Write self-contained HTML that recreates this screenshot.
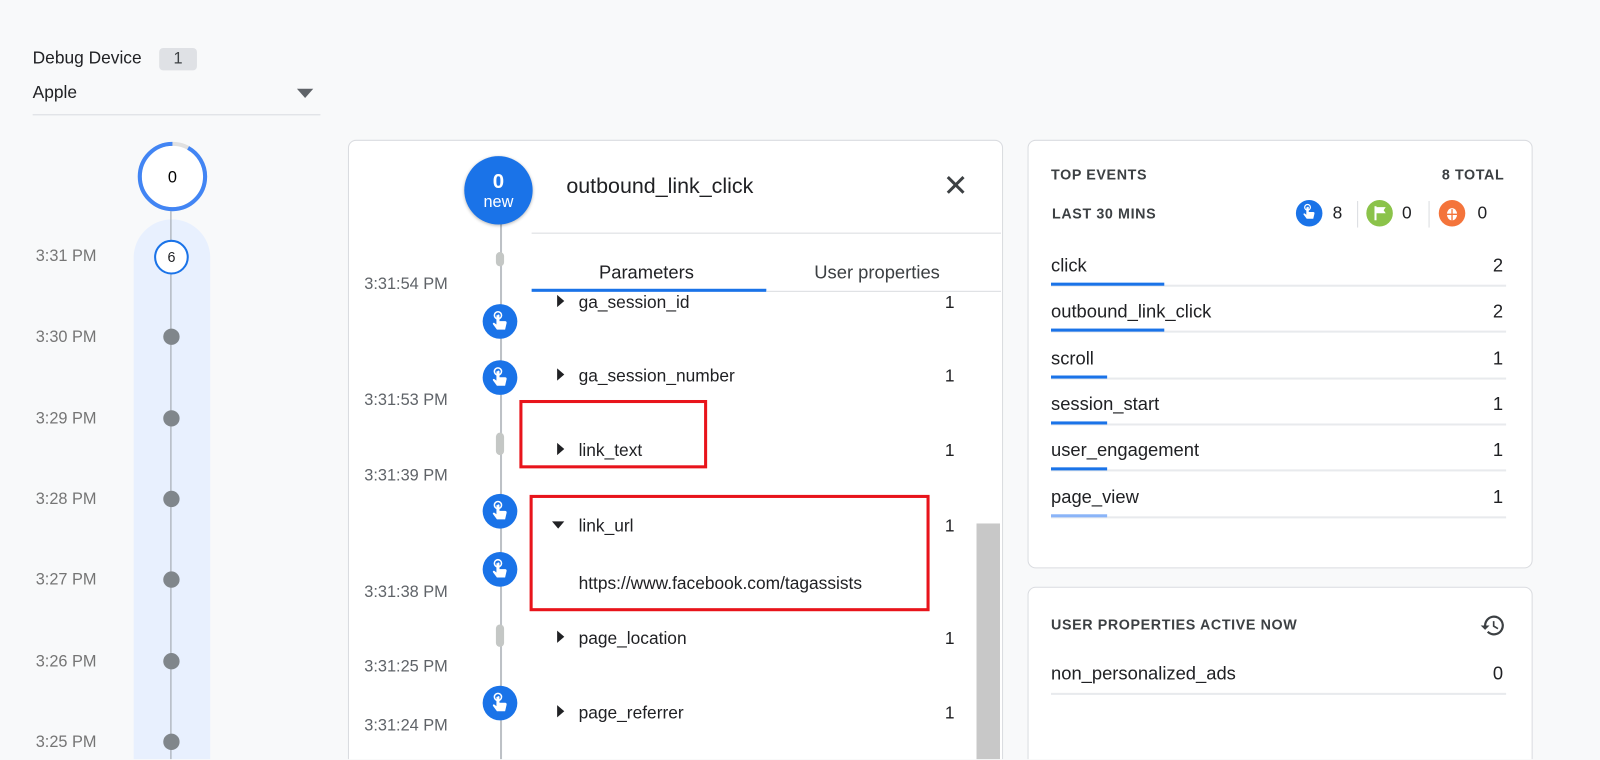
<!DOCTYPE html>
<html><head><style>
html,body{margin:0;width:1600px;height:760px;overflow:hidden;background:#f8f9fa}
#w{position:absolute;left:0;top:0;width:1568px;height:744px;overflow:hidden;transform:scale(1.0204);transform-origin:0 0;font-family:"Liberation Sans",Arial,sans-serif;color:#202124}
.a{position:absolute}
.t{position:absolute;font-size:16px;color:#757575}
.tm{position:absolute;font-size:16px;color:#5f6368}
.dot{position:absolute;width:16px;height:16px;border-radius:50%;background:#80868b;left:160px}
.hand{position:absolute;width:34px;height:34px;border-radius:50%;background:#1a73e8;left:473px}
.hand svg{position:absolute;left:7px;top:6px}
.seg{position:absolute;left:486px;width:8px;height:22px;border-radius:4px;background:#c4c7c5}
.pn{position:absolute;left:567px;font-size:17px;color:#202124}
.pv{position:absolute;left:926px;font-size:17px}
.tri{position:absolute;left:546px;width:0;height:0;border-top:6px solid transparent;border-bottom:6px solid transparent;border-left:7px solid #202124}
.card{position:absolute;background:#fff;border:1px solid #dadce0;border-radius:8px}
.ev{position:absolute;left:1030px;font-size:18px;color:#202124}
.evv{position:absolute;left:1463px;font-size:18px}
.ul{position:absolute;left:1030px;width:446px;height:2px;background:#e8eaed}
.ub{position:absolute;left:1030px;height:3px;background:#1a73e8}
</style></head><body><div id="w">
<div class="a" style="left:32px;top:47px;font-size:17px">Debug Device</div>
<div class="a" style="left:156px;top:47px;width:37px;height:22px;background:#dfe1e5;border-radius:4px;text-align:center;font-size:16px;line-height:22px;color:#3c4043">1</div>
<div class="a" style="left:32px;top:81px;font-size:17px">Apple</div>
<div class="a" style="left:291px;top:87px;border-left:8px solid transparent;border-right:8px solid transparent;border-top:9px solid #5f6368"></div>
<div class="a" style="left:32px;top:112px;width:282px;height:1px;background:#dadce0"></div>

<div class="a" style="left:131px;top:215px;width:75px;height:700px;background:#e8f0fe;border-radius:38px"></div>
<div class="a" style="left:167px;top:200px;width:1px;height:600px;background:#9aa0a6"></div>
<svg class="a" style="left:134px;top:138px" width="70" height="70"><circle cx="35" cy="35" r="32" fill="#fff" stroke="#e0e0e0" stroke-width="4"/><circle cx="35" cy="35" r="32" fill="none" stroke="#4285f4" stroke-width="4" stroke-dasharray="185 201" transform="rotate(-90 35 35)" stroke-dashoffset="-16"/><text x="35" y="41" text-anchor="middle" font-size="16" font-family="Liberation Sans">0</text></svg>
<div class="a" style="left:151px;top:235px;width:34px;height:34px;border-radius:50%;border:2px solid #1a73e8;background:#fff;text-align:center;font-size:14px;box-sizing:border-box;line-height:30px">6</div>
<div class="t" style="left:35px;top:243px">3:31 PM</div>
<div class="t" style="left:35px;top:322px">3:30 PM</div><div class="dot" style="top:322px"></div>
<div class="t" style="left:35px;top:402px">3:29 PM</div><div class="dot" style="top:402px"></div>
<div class="t" style="left:35px;top:481px">3:28 PM</div><div class="dot" style="top:481px"></div>
<div class="t" style="left:35px;top:560px">3:27 PM</div><div class="dot" style="top:560px"></div>
<div class="t" style="left:35px;top:640px">3:26 PM</div><div class="dot" style="top:640px"></div>
<div class="t" style="left:35px;top:719px">3:25 PM</div><div class="dot" style="top:719px"></div>

<div class="card" style="left:341px;top:137px;width:640px;height:700px"></div>
<div class="a" style="left:490px;top:215px;width:2px;height:600px;background:#bdc1c6"></div>
<div class="seg" style="top:247px;height:14px"></div>
<div class="seg" style="top:424px"></div>
<div class="seg" style="top:612px"></div>
<div class="a" style="left:455px;top:153px;width:67px;height:67px;border-radius:50%;background:#1a73e8;color:#fff;text-align:center;box-shadow:0 1px 3px rgba(0,0,0,.3)"><div style="font-size:20px;font-weight:bold;margin-top:14px">0</div><div style="font-size:16px">new</div></div>
<div class="a" style="left:555px;top:171px;font-size:21px">outbound_link_click</div>
<div class="a" style="left:924px;top:168px;font-size:30px;line-height:30px;color:#3c4043">✕</div>
<div class="a" style="left:521px;top:228px;width:460px;height:1px;background:#dadce0"></div>
<div class="a" style="left:587px;top:257px;font-size:18px">Parameters</div>
<div class="a" style="left:798px;top:257px;font-size:18px;color:#3c4043">User properties</div>
<div class="a" style="left:521px;top:283px;width:230px;height:3px;background:#1a73e8"></div>
<div class="a" style="left:751px;top:285px;width:230px;height:1px;background:#dadce0"></div>
<div class="a" style="left:957px;top:513px;width:23px;height:300px;background:#c8c8c8"></div>

<div class="tm" style="left:357px;top:270px">3:31:54 PM</div>
<div class="tm" style="left:357px;top:384px">3:31:53 PM</div>
<div class="tm" style="left:357px;top:458px">3:31:39 PM</div>
<div class="tm" style="left:357px;top:572px">3:31:38 PM</div>
<div class="tm" style="left:357px;top:645px">3:31:25 PM</div>
<div class="tm" style="left:357px;top:703px">3:31:24 PM</div>

<svg width="0" height="0" style="position:absolute"><defs><symbol id="h" viewBox="0 0 20 22"><circle cx="8" cy="5" r="3.5" fill="none" stroke="#fff" stroke-width="1.5"/><path d="M6.5 5v9l-2-1.5c-1-.6-2 .5-1.3 1.4L7 19h8l1.5-6.5c.2-1-.5-1.8-1.5-1.8h-5.5V5c0-1-2-1-2 0z" fill="#fff"/></symbol></defs></svg>
<div class="hand" style="top:298px"><svg width="20" height="22"><use href="#h"/></svg></div>
<div class="hand" style="top:353px"><svg width="20" height="22"><use href="#h"/></svg></div>
<div class="hand" style="top:484px"><svg width="20" height="22"><use href="#h"/></svg></div>
<div class="hand" style="top:541px"><svg width="20" height="22"><use href="#h"/></svg></div>
<div class="hand" style="top:672px"><svg width="20" height="22"><use href="#h"/></svg></div>

<div class="tri" style="top:289px"></div><div class="pn" style="top:287px">ga_session_id</div><div class="pv" style="top:287px">1</div>
<div class="tri" style="top:361px"></div><div class="pn" style="top:359px">ga_session_number</div><div class="pv" style="top:359px">1</div>
<div class="tri" style="top:434px"></div><div class="pn" style="top:432px">link_text</div><div class="pv" style="top:432px">1</div>
<div class="a" style="left:541px;top:511px;border-left:6px solid transparent;border-right:6px solid transparent;border-top:7px solid #202124"></div><div class="pn" style="top:506px">link_url</div><div class="pv" style="top:506px">1</div>
<div class="pn" style="top:562px">https://www.facebook.com/tagassists</div>
<div class="tri" style="top:618px"></div><div class="pn" style="top:616px">page_location</div><div class="pv" style="top:616px">1</div>
<div class="tri" style="top:691px"></div><div class="pn" style="top:689px">page_referrer</div><div class="pv" style="top:689px">1</div>
<div class="a" style="left:509px;top:392px;width:178px;height:61px;border:3px solid #e8141b"></div>
<div class="a" style="left:519px;top:485px;width:386px;height:108px;border:3px solid #e8141b"></div>

<div class="card" style="left:1007px;top:137px;width:493px;height:418px"></div>
<div class="a" style="left:1030px;top:163px;font-size:14px;font-weight:bold;letter-spacing:.6px;color:#3c4043">TOP EVENTS</div>
<div class="a" style="left:1413px;top:163px;font-size:14px;font-weight:bold;letter-spacing:.6px;color:#3c4043">8 TOTAL</div>
<div class="a" style="left:1031px;top:201px;font-size:14px;font-weight:bold;letter-spacing:.6px;color:#3c4043">LAST 30 MINS</div>
<div class="a" style="left:1270px;top:196px;width:26px;height:26px;border-radius:50%;background:#1a73e8"><svg style="position:absolute;left:5px;top:3px" width="16" height="18"><use href="#h"/></svg></div>
<div class="a" style="left:1306px;top:199px;font-size:17px">8</div>
<div class="a" style="left:1330px;top:197px;width:1px;height:26px;background:#dadce0"></div>
<div class="a" style="left:1339px;top:196px;width:26px;height:26px;border-radius:50%;background:#8bc34a"><svg style="position:absolute;left:7px;top:6px" width="13" height="14"><path d="M1 0h2v14H1zM3 1h9l-2 3 2 3H3z" fill="#fff"/></svg></div>
<div class="a" style="left:1374px;top:199px;font-size:17px">0</div>
<div class="a" style="left:1400px;top:197px;width:1px;height:26px;background:#dadce0"></div>
<div class="a" style="left:1410px;top:196px;width:26px;height:26px;border-radius:50%;background:#f4743b"><svg style="position:absolute;left:6px;top:5px" width="14" height="16"><ellipse cx="7" cy="9" rx="5" ry="6" fill="#fff"/><path d="M2 9h10M7 4v11" stroke="#f4743b" stroke-width="1.3"/></svg></div>
<div class="a" style="left:1448px;top:199px;font-size:17px">0</div>

<div class="ev" style="top:250px">click</div><div class="evv" style="top:250px">2</div><div class="ul" style="top:279px"></div><div class="ub" style="top:277px;width:111px"></div>
<div class="ev" style="top:295px">outbound_link_click</div><div class="evv" style="top:295px">2</div><div class="ul" style="top:324px"></div><div class="ub" style="top:322px;width:111px"></div>
<div class="ev" style="top:341px">scroll</div><div class="evv" style="top:341px">1</div><div class="ul" style="top:370px"></div><div class="ub" style="top:368px;width:55px"></div>
<div class="ev" style="top:386px">session_start</div><div class="evv" style="top:386px">1</div><div class="ul" style="top:415px"></div><div class="ub" style="top:413px;width:55px"></div>
<div class="ev" style="top:431px">user_engagement</div><div class="evv" style="top:431px">1</div><div class="ul" style="top:460px"></div><div class="ub" style="top:458px;width:55px"></div>
<div class="ev" style="top:477px">page_view</div><div class="evv" style="top:477px">1</div><div class="ul" style="top:506px"></div><div class="ub" style="top:504px;width:55px;background:#8ab4f8"></div>

<div class="card" style="left:1007px;top:575px;width:493px;height:260px"></div>
<div class="a" style="left:1030px;top:604px;font-size:14px;font-weight:bold;letter-spacing:.6px;color:#3c4043">USER PROPERTIES ACTIVE NOW</div>
<svg class="a" style="left:1450px;top:600px" width="26" height="26" viewBox="0 0 24 24"><path d="M13 3a9 9 0 0 0-9 9H1l4 4 4-4H6a7 7 0 1 1 2.05 4.95l-1.42 1.42A9 9 0 1 0 13 3zm-1 5v5l4.25 2.52.77-1.28-3.52-2.09V8z" fill="#3c4043"/></svg>
<div class="ev" style="top:650px">non_personalized_ads</div><div class="evv" style="top:650px">0</div><div class="ul" style="top:679px"></div>
</div></body></html>
